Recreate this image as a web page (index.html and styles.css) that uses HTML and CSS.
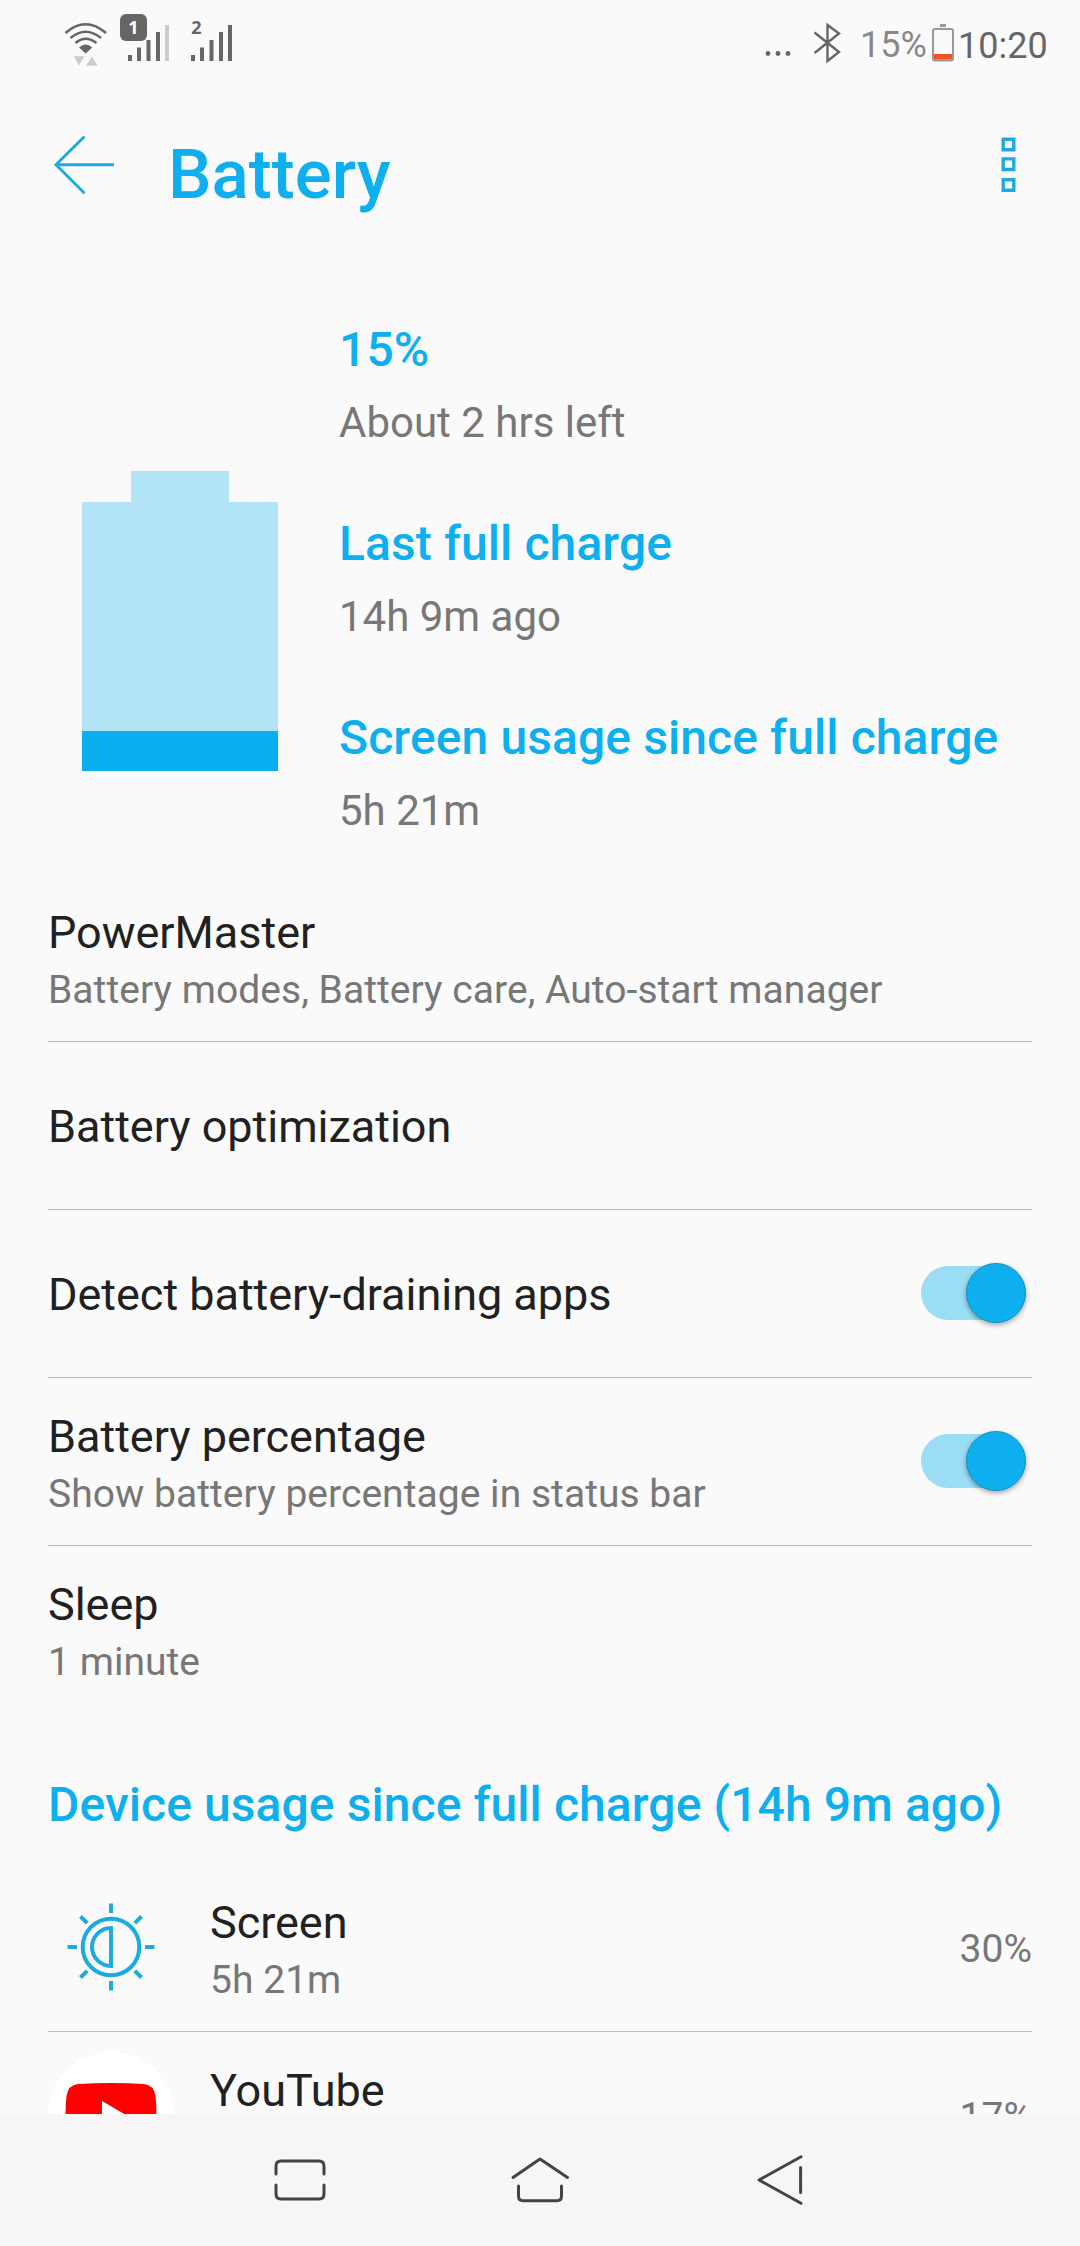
FILE: index.html
```
<!DOCTYPE html>
<html lang="en">
<head>
    <meta charset="UTF-8">
    <meta name="viewport" content="width=device-width, initial-scale=1.0">
    <title>Battery</title>
    <link rel="stylesheet" href="styles.css">
</head>
<body>
    <div class="status-bar">
        <svg class="wifi" width="44" height="54" viewBox="64 14 44 54">
            <g fill="none" stroke="#666" stroke-width="2.6">
                <path d="M65.5 33Q85.500 15.500 106 33"/>
                <path d="M70.500 38Q85.500 25.500 101 38"/>
                <path d="M75.500 43Q85.500 34.500 96.500 43"/>
            </g>
            <path d="M79 47.500Q85.700 41.500 92.300 47.500L85.700 53.500Z" fill="#666"/>
            <path d="M73.700 56.300H84.500L79 65.500ZM86 65.700H97.600L91.800 56.500Z" fill="#ccc"/>
        </svg>
        <svg class="sim" width="50" height="54" viewBox="120 14 50 54">
            <path d="M128 55h4v6h-4zM137 47.500h4V61h-4zM146.500 40h4v21h-4zM156 32h4v29h-4z" fill="#666"/>
            <path d="M165 25h4v36h-4z" fill="#ccc"/>
            <rect x="120" y="14" width="27" height="27" rx="6" fill="#666"/>
            <text x="133.500" y="34" class="sim-num sim-active">1</text>
        </svg>
        <svg class="sim" width="44" height="54" viewBox="190 14 44 54">
            <path d="M191 55h4v6h-4zM200 47.500h4V61h-4zM209.500 40h4v21h-4zM219 32h4v29h-4zM228 25h4v36h-4z" fill="#666"/>
            <text x="196.300" y="34" class="sim-num">2</text>
        </svg>
        <div class="status-right">
            <svg width="76" height="54" viewBox="765 14 76 54">
                <g fill="#666">
                    <circle cx="768" cy="53.500" r="2.400"/>
                    <circle cx="778" cy="53.500" r="2.400"/>
                    <circle cx="788" cy="53.500" r="2.400"/>
                </g>
                <path d="M814.500 32.500L839 52L827.500 61V25L839 33.500L814.500 53" fill="none" stroke="#666" stroke-width="2.400"/>
            </svg>
            <span class="percent">15%</span>
            <svg width="22" height="54" viewBox="932 14 22 54">
                <path d="M940 24h6v3h-6z" fill="#999"/>
                <rect x="933" y="29" width="20" height="31.500" rx="2" fill="none" stroke="#999" stroke-width="2"/>
                <path d="M934 54h18v5.500h-18z" fill="#f4511e"/>
            </svg>
            <span class="clock">10:20</span>
        </div>
    </div>

    <header class="header">
        <svg width="62" height="60" viewBox="53 135 62 60" fill="none" stroke="#1eaae0" stroke-width="2.900">
            <path d="M114 164.800H56M84.500 136.500L56 164.800L84.500 193.200"/>
        </svg>
        <h1>Battery</h1>
        <svg class="menu" width="16" height="56" viewBox="1001 137 16 56" fill="none" stroke="#1eaae0" stroke-width="3.400">
            <path d="M1003.200 139.200h10.600v10.600h-10.600zM1003.200 158.900h10.600v10.600h-10.600zM1003.200 179.700h10.600v10.600h-10.600z"/>
        </svg>
    </header>

    <main>
        <section class="summary">
            <div class="battery">
                <div class="battery-cap"></div>
                <div class="battery-body">
                    <div class="battery-level"></div>
                </div>
            </div>
            <div class="stats">
                <div class="stat">
                    <h2>15%</h2>
                    <p>About 2 hrs left</p>
                </div>
                <div class="stat">
                    <h2>Last full charge</h2>
                    <p>14h 9m ago</p>
                </div>
                <div class="stat">
                    <h2>Screen usage since full charge</h2>
                    <p>5h 21m</p>
                </div>
            </div>
        </section>

        <section class="list">
            <div class="row">
                <div class="label">
                    <div class="title">PowerMaster</div>
                    <div class="sub">Battery modes, Battery care, Auto-start manager</div>
                </div>
            </div>
            <div class="row">
                <div class="label single">
                    <div class="title">Battery optimization</div>
                </div>
            </div>
            <div class="row">
                <div class="label single">
                    <div class="title">Detect battery-draining apps</div>
                </div>
                <div class="toggle"><span class="thumb"></span></div>
            </div>
            <div class="row">
                <div class="label">
                    <div class="title">Battery percentage</div>
                    <div class="sub">Show battery percentage in status bar</div>
                </div>
                <div class="toggle"><span class="thumb"></span></div>
            </div>
            <div class="row last">
                <div class="label">
                    <div class="title">Sleep</div>
                    <div class="sub">1 minute</div>
                </div>
            </div>
        </section>

        <h2 class="section-title">Device usage since full charge (14h 9m ago)</h2>

        <section class="list">
            <div class="row">
                <svg class="app-icon" width="126" height="126" viewBox="-63 -63 126 126" fill="none" stroke="#1eaae0" stroke-width="4">
                    <circle r="28.300"/>
                    <path d="M0 -19A19 19 0 0 0 0 19Z"/>
                    <path d="M0 -43.500V-34M0 43.500V34M-43.500 0H-34M43.500 0H34M-30.500 -30.500L-23.800 -23.800M30.500 -30.500L23.800 -23.800M-30.500 30.500L-23.800 23.800M30.500 30.500L23.800 23.800"/>
                </svg>
                <div class="label">
                    <div class="title">Screen</div>
                    <div class="sub">5h 21m</div>
                </div>
                <div class="usage">30%</div>
            </div>
            <div class="row">
                <svg class="app-icon" width="126" height="126" viewBox="-63 -63 126 126">
                    <circle r="63" fill="#fff"/>
                    <path d="M-33 -31Q0 -33 33 -31Q43 -30 44.500 -19Q46.500 0 44.500 19Q43 30 33 31Q0 33 -33 31Q-43 30 -44.500 19Q-46.500 0 -44.500 -19Q-43 -30 -33 -31Z" fill="#f00"/>
                    <path d="M-9 -14V14L15 0Z" fill="#fff"/>
                </svg>
                <div class="label">
                    <div class="title">YouTube</div>
                    <div class="sub"></div>
                </div>
                <div class="usage">17%</div>
            </div>
        </section>
    </main>

    <nav class="nav-bar">
        <svg width="60" height="60" viewBox="270 2150 60 60">
            <path d="M276 2174V2166Q276 2161 281 2161H319Q324 2161 324 2166V2174M276 2185V2194Q276 2199 281 2199H319Q324 2199 324 2194V2185"/>
        </svg>
        <svg width="60" height="60" viewBox="510 2150 60 60">
            <path d="M513 2177.500L540 2159L567.500 2177.500M518.500 2186V2196Q518.500 2200.700 523 2200.700H557Q561.500 2200.700 561.500 2196V2186"/>
        </svg>
        <svg width="60" height="60" viewBox="750 2150 60 60">
            <path d="M801 2156.800L759 2180L801 2203.200M800.600 2167.500V2192.500"/>
        </svg>
    </nav>
</body>
</html>
```

FILE: styles.css
```
* {
    box-sizing: border-box;
}

body {
    margin: 0;
    width: 1080px;
    height: 2246px;
    display: flex;
    flex-direction: column;
    overflow: hidden;
    background: #fafafa;
    color: #212121;
    font-family: Roboto, sans-serif;
}

h1, h2, p {
    margin: 0;
    font-weight: 500;
}

svg {
    display: block;
    flex-shrink: 0;
}

/* status bar */
.status-bar {
    display: flex;
    align-items: flex-start;
    height: 84px;
    padding: 14px 33px 0 64px;
    color: #666;
    font-size: 36px;
    line-height: 62px;
}

.wifi {
    margin-right: 12px;
}

.sim {
    margin-right: 20px;
}

.sim-num {
    font: bold 18px "Noto Sans", sans-serif;
    text-anchor: middle;
    fill: #666;
}

.sim-num.sim-active {
    fill: #fff;
}

.status-right {
    display: flex;
    margin-left: auto;
}

.percent {
    width: 72px;
    margin-left: 19px;
    color: #888;
}

.clock {
    width: 89px;
    margin-left: 4px;
    line-height: 64px;
}

/* header */
.header {
    display: flex;
    align-items: flex-start;
    height: 216px;
    padding: 51px 63px 0 53px;
    color: #0eafee;
}

.header h1 {
    margin-left: 53px;
    font-size: 69px;
    line-height: 80px;
}

.menu {
    margin-top: 2px;
    margin-left: auto;
}

main {
    flex: 1;
    min-height: 0;
    overflow: hidden;
}

/* battery summary */
.summary {
    display: flex;
    height: 574px;
    padding-left: 82px;
}

.battery {
    width: 196px;
    margin-top: 171px;
}

.battery-cap {
    width: 98px;
    height: 31px;
    margin: 0 auto;
    background: #b3e5f6;
}

.battery-body {
    display: flex;
    align-items: flex-end;
    height: 269px;
    background: #b3e5f6;
}

.battery-level {
    width: 100%;
    height: 15%;
    background: #0aafef;
}

.stats {
    padding-top: 17px;
    margin-left: 61px;
}

.stat {
    height: 194px;
}

.stat h2 {
    color: #0eafee;
    font-size: 48px;
    letter-spacing: 0.1px;
    line-height: 66px;
}

.stat p {
    color: #777;
    font-size: 42px;
    font-weight: 400;
    line-height: 80px;
}

/* preference rows */
.list {
    padding: 0 48px;
}

.row {
    display: flex;
    align-items: center;
    height: 168px;
    border-bottom: 1px solid #bbb;
}

.row.last {
    border-bottom-color: transparent;
}

.label {
    flex: 1;
    padding-top: 10px;
}

.label.single {
    padding-top: 2px;
}

.title {
    font-size: 45px;
    letter-spacing: -0.03px;
    line-height: 54px;
}

.sub {
    min-height: 60px;
    color: #777;
    font-size: 39px;
    letter-spacing: 0.04px;
    line-height: 60px;
}

.toggle {
    display: flex;
    align-items: center;
    justify-content: flex-end;
    width: 105px;
    height: 54px;
    margin: 0 6px 1px 0;
    border-radius: 27px;
    background: #9bddf5;
}

.thumb {
    width: 60px;
    height: 60px;
    flex-shrink: 0;
    border: 1px solid #1593c6;
    border-radius: 50%;
    background: #0eafee;
    box-shadow: 0 2px 5px rgba(0, 0, 0, 0.35);
}

.section-title {
    padding: 0 48px;
    height: 150px;
    color: #0eafee;
    font-size: 48px;
    letter-spacing: 0.08px;
    line-height: 182px;
}

.app-icon {
    margin: 0 36px 1px 0;
}

.usage {
    padding-top: 2px;
    color: #777;
    font-size: 39px;
}

/* navigation keys */
.nav-bar {
    display: flex;
    justify-content: center;
    align-items: center;
    gap: 180px;
    height: 132px;
    background: #f6f6f6;
}

.nav-bar svg {
    fill: none;
    stroke: #444;
    stroke-width: 3;
    stroke-linecap: round;
    stroke-linejoin: round;
}
```
